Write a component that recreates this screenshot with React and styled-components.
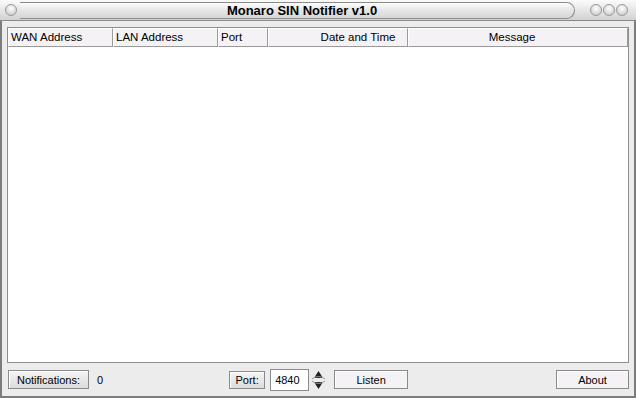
import React from "react";
import styled, { createGlobalStyle } from "styled-components";

const Global = createGlobalStyle`
  html, body {
    margin: 0;
    padding: 0;
    background: #ececec;
  }
  body {
    font-family: "Liberation Sans", Arial, sans-serif;
    font-size: 11px;
    color: #000;
  }
`;

const Window = styled.div`
  width: 636px;
  height: 398px;
  box-sizing: border-box;
  border: 2px solid #7c7c7c;
  border-top: none;
  background: #ececec;
  display: flex;
  flex-direction: column;
`;

const TitleBar = styled.div`
  height: 20px;
  flex: none;
  display: flex;
  align-items: center;
  background: linear-gradient(#fbfbfb, #e4e4e4 55%, #d2d2d2);
  border-bottom: 1px solid #8a8a8a;
  margin: 0 -2px;
`;

const Dot = styled.span`
  width: 10px;
  height: 10px;
  border-radius: 50%;
  border: 1px solid #9a9a9a;
  background: radial-gradient(circle at 50% 35%, #ffffff, #d4d4d4 70%, #bdbdbd);
  flex: none;
  margin-left: ${(p) => p.$ml || 0}px;
`;

const Pill = styled.div`
  flex: 1;
  height: 17px;
  margin-left: 3px;
  border: 1px solid #8c8c8c;
  border-left: none;
  border-radius: 0 10px 10px 0;
  background: linear-gradient(#fdfdfd, #e6e6e6 50%, #d6d6d6);
  display: flex;
  align-items: center;
  justify-content: center;
  font-weight: bold;
  font-size: 13px;
  padding-left: 10px;
  box-sizing: border-box;
`;

const Controls = styled.div`
  display: flex;
  gap: 1px;
  padding: 0 8px 0 15px;
`;

const Body = styled.div`
  flex: 1;
  display: flex;
  flex-direction: column;
  padding: 6px 5px 0 5px;
  min-height: 0;
`;

const Table = styled.div`
  flex: 1;
  background: #fff;
  border: 1px solid #8e8e8e;
  display: flex;
  flex-direction: column;
`;

const HeaderRow = styled.div`
  display: flex;
  height: 19px;
`;

const HeadCell = styled.div`
  width: ${(p) => p.$w}px;
  box-sizing: border-box;
  background: #f5f2f5;
  border-top: 1px solid #ffffff;
  border-left: 1px solid #ffffff;
  border-right: 1px solid #9a9a9a;
  border-bottom: 1px solid #9a9a9a;
  display: flex;
  align-items: center;
  justify-content: ${(p) => (p.$center ? "center" : "flex-start")};
  padding: 0 ${(p) => p.$pr || 0}px 1px ${(p) => (p.$center ? p.$pl || 0 : 2)}px;
  font-size: 11.5px;
  white-space: nowrap;
  overflow: hidden;
`;

const BottomBar = styled.div`
  height: 33px;
  flex: none;
  display: flex;
  align-items: center;
  padding-left: 1px;
`;

const Button = styled.div`
  box-sizing: border-box;
  width: ${(p) => p.$w}px;
  height: ${(p) => p.$h || 19}px;
  margin-left: ${(p) => p.$ml || 0}px;
  display: flex;
  align-items: center;
  justify-content: center;
  border: 1px solid #8a8a8a;
  background: ${(p) =>
    p.$plain ? "#f5f2f5" : "linear-gradient(#f4f4f4, #dcdcdc)"};
  box-shadow: inset 1px 1px 0 #ffffff;
  flex: none;
`;

const Count = styled.span`
  margin-left: 8px;
`;

const Input = styled.div`
  box-sizing: border-box;
  width: 39px;
  height: 22px;
  margin-left: 5px;
  border: 1px solid #8a8a8a;
  background: #fff;
  display: flex;
  align-items: center;
  padding-left: 4px;
  flex: none;
`;

const Spinner = styled.svg`
  margin-left: 2px;
  flex: none;
`;

const Spacer = styled.div`
  flex: 1;
`;

export default function App() {
  return (
    <>
      <Global />
      <Window>
        <TitleBar>
          <Dot $ml={5} />
          <Pill>Monaro SIN Notifier v1.0</Pill>
          <Controls>
            <Dot />
            <Dot />
            <Dot />
          </Controls>
        </TitleBar>
        <Body>
          <Table>
            <HeaderRow>
              <HeadCell $w={105}>WAN Address</HeadCell>
              <HeadCell $w={105}>LAN Address</HeadCell>
              <HeadCell $w={50}>Port</HeadCell>
              <HeadCell $w={140} $center $pl={40}>
                Date and Time
              </HeadCell>
              <HeadCell $w={220} $center $pr={12}>
                Message
              </HeadCell>
            </HeaderRow>
          </Table>
          <BottomBar>
            <Button $w={81}>Notifications:</Button>
            <Count>0</Count>
            <Button $w={36} $h={18} $ml={126}>
              Port:
            </Button>
            <Input>4840</Input>
            <Spinner width="15" height="22" viewBox="0 0 15 22">
              <path d="M3 9 L7.5 2 L12 9 Z" fill="#222" />
              <path d="M3 13 L7.5 20 L12 13 Z" fill="#222" />
              <path d="M1 10 Q7.5 5 14 10 M1 12 Q7.5 17 14 12" stroke="#9a9a9a" fill="none" />
            </Spinner>
            <Button $w={74} $ml={8} $plain>
              Listen
            </Button>
            <Spacer />
            <Button $w={73} $plain>
              About
            </Button>
          </BottomBar>
        </Body>
      </Window>
    </>
  );
}
